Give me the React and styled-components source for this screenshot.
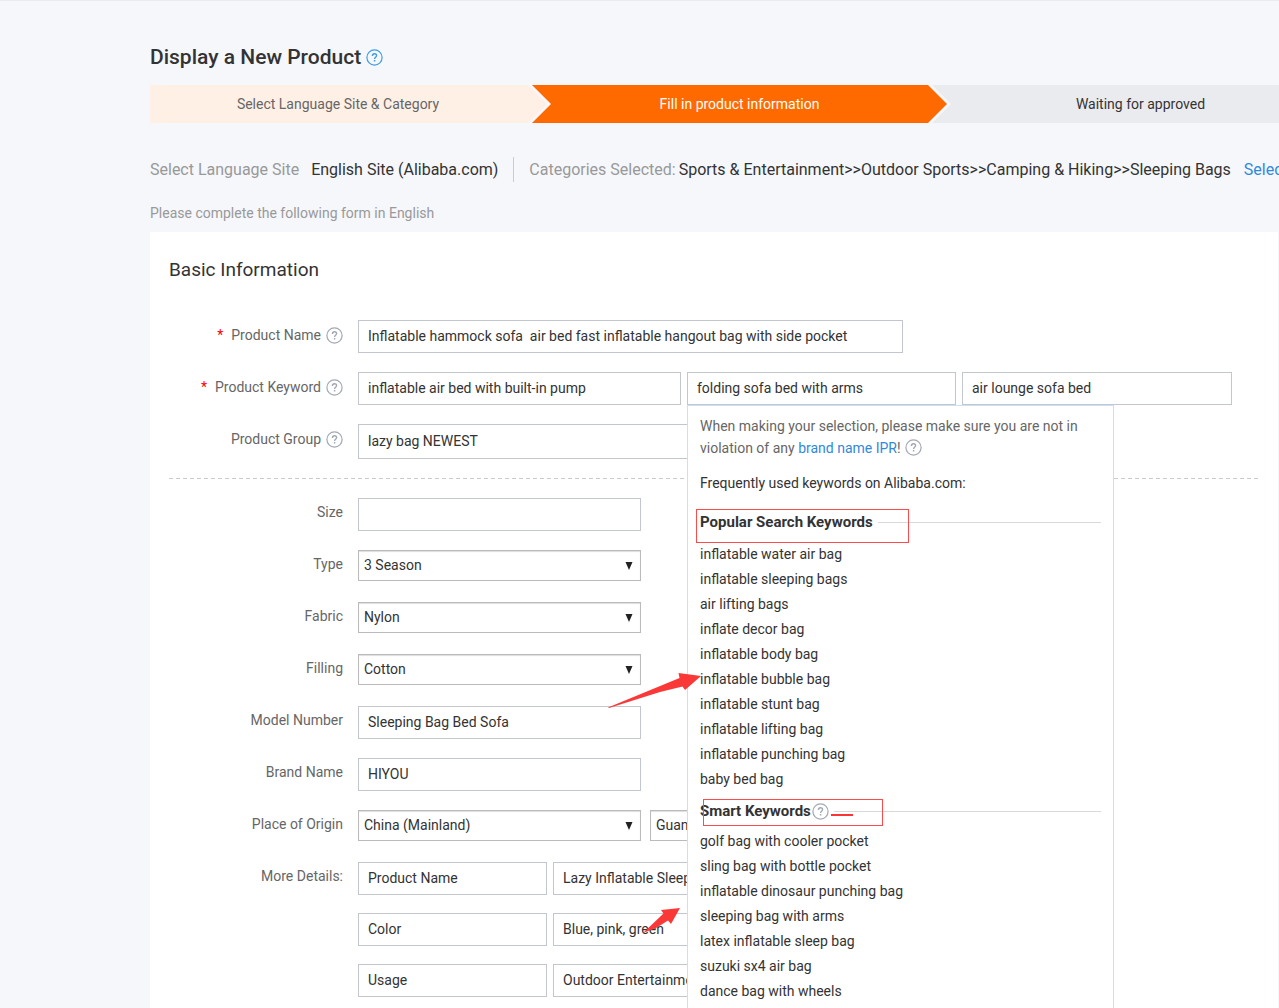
import React from "react";
import styled, { createGlobalStyle } from "styled-components";

const GlobalStyle = createGlobalStyle`
  * {
    box-sizing: border-box;
  }

  body {
    margin: 0;
    background-color: #f5f7fb;
  }

  body, input, select {
    font-family: Roboto, "Liberation Sans", sans-serif;
    font-size: 14px;
    color: #333;
  }
`;

const Page = styled.div`
  display: flex;
  flex-direction: column;
  min-height: 100vh;
  padding: 42px 1px 0 150px;
  border-top: 1px solid #e9ebf0;
  overflow: hidden;
`;

const TitleRow = styled.div`
  display: flex;
  align-items: center;
  gap: 5px;
  height: 28px;
`;

const Title = styled.h1`
  margin: 0;
  font-size: 21px;
  font-weight: 500;
  line-height: 28px;
`;

const HelpSvg = styled.svg`
  flex: none;
  width: 17px;
  height: 17px;
  fill: none;
  stroke: ${(props) => (props.$blue ? "#3f9de3" : "#a3a8b5")};
`;

/* Progress bar */
const Steps = styled.ol`
  display: grid;
  grid-template-columns: 382fr 400fr 421fr;
  min-width: 1203px;
  margin: 14px 0 0;
  padding: 0;
  list-style: none;
`;

const Step = styled.li`
  height: 38px;
  line-height: 38px;
  text-align: center;
`;

const DoneStep = styled(Step)`
  margin-right: -15px;
  padding-right: 21px;
  background-color: #fff0e6;
  color: #666;
  clip-path: polygon(0 0, calc(100% - 19px) 0, 100% 50%, calc(100% - 19px) 100%, 0 100%);
`;

const CurrentStep = styled(Step)`
  margin-right: -15px;
  background-color: #ff6a00;
  color: #fff;
  clip-path: polygon(0 0, calc(100% - 19px) 0, 100% 50%, calc(100% - 19px) 100%, 0 100%, 19px 50%);
`;

const NextStep = styled(Step)`
  padding-right: 4px;
  background-color: #eaebef;
  color: #333;
  clip-path: polygon(0 0, 100% 0, 100% 100%, 0 100%, 19px 50%);
`;

/* Selected site and category */
const Summary = styled.div`
  display: flex;
  align-items: center;
  height: 26px;
  margin-top: 33px;
  font-size: 16px;
  white-space: nowrap;
`;

const SummaryLabel = styled.span`
  margin-right: ${(props) => props.$gap}px;
  color: #999;
`;

const SummaryDivider = styled.span`
  flex: none;
  width: 1px;
  height: 25px;
  margin: 0 15px;
  background-color: #ccc;
`;

const Link = styled.a`
  color: #3089dc;
  text-decoration: none;
`;

const SelectLink = styled(Link)`
  margin-left: 13px;
`;

const Hint = styled.p`
  margin: 21px 0 9px;
  line-height: 20px;
  color: #999;
`;

/* Form */
const Card = styled.form`
  flex: 1;
  padding: 25px 19px 11px;
  background-color: #fff;
`;

const CardTitle = styled.h2`
  margin: 0 0 37px;
  font-size: 19px;
  font-weight: 400;
  line-height: 26px;
`;

const Row = styled.div`
  display: grid;
  grid-template-columns: 174px minmax(0, 1fr);
  column-gap: 15px;
  min-height: 52px;
`;

const Label = styled.label`
  display: flex;
  align-items: center;
  justify-content: flex-end;
  height: ${(props) => (props.$help ? 30 : 28)}px;
  color: #666;
`;

const Required = styled.span`
  margin-right: 8px;
  color: #f00;
`;

const LabelText = styled.span`
  margin-right: ${(props) => (props.$help ? 5 : 0)}px;
`;

const Fields = styled.div`
  display: flex;
  align-items: flex-start;
  gap: ${(props) => props.$gap || 6}px;
`;

const KeywordFields = styled.div`
  display: grid;
  grid-template-columns: 323fr 269fr 270fr;
  align-items: start;
  gap: 6px;
  max-width: 874px;
`;

const Input = styled.input`
  width: 100%;
  max-width: ${(props) => (props.$width ? `${props.$width}px` : "none")};
  height: ${(props) => (props.$tall ? 35 : 33)}px;
  padding: 0 9px 2px;
  border: 1px solid #c4c6cf;
  border-radius: 0;
  background-color: #fff;
  outline: none;
`;

const SelectBox = styled.div`
  display: grid;
  align-items: center;
  align-self: start;
  width: ${(props) => props.$width}px;

  > * {
    grid-area: 1 / 1;
  }
`;

const Select = styled.select`
  width: 100%;
  height: 31px;
  padding: 0 24px 1px 5px;
  border: 1px solid #bbb;
  border-radius: 0;
  background-color: #fff;
  box-shadow: inset 0 1px 1px #ddd;
  appearance: none;
  outline: none;
`;

const Caret = styled.svg`
  justify-self: end;
  width: 8px;
  height: 8px;
  margin-right: 8px;
  fill: #222;
  pointer-events: none;
`;

const Divider = styled.div`
  height: 1px;
  margin: 2px 0 19px;
  background: repeating-linear-gradient(to right, #ccc 0 4px, transparent 4px 7px);
`;

const DetailRows = styled.div`
  display: flex;
  flex-direction: column;
  gap: 18px;
`;

/* Keyword suggestions */
const KeywordField = styled.div`
  position: relative;
`;

const Popup = styled.div`
  position: absolute;
  z-index: 1;
  top: 100%;
  left: 0;
  width: 427px;
  padding: 9px 12px 40px;
  border: 1px solid #c9e0f5;
  background-color: #fff;
`;

const Notice = styled.p`
  margin: 0;
  line-height: 22px;
  color: #666;

  ${HelpSvg} {
    margin-left: 4px;
    vertical-align: -3px;
  }
`;

const Frequent = styled.p`
  margin: 13px 0 18px;
  line-height: 22px;
`;

const SectionHead = styled.div`
  position: relative;
  display: flex;
  align-items: center;
  gap: 1px;
  height: 20px;

  &::after {
    content: "";
    flex: 1;
    height: 1px;
    margin-left: 4px;
    background-color: #d9d9d9;
  }
`;

const SectionTitle = styled.h3`
  margin: 0;
  font-size: 15px;
  font-weight: 700;
`;

const Keywords = styled.ul`
  margin: ${(props) => (props.$tight ? 8 : 10)}px 0 9px;
  padding: 0;
  list-style: none;
  line-height: 25px;
`;

/* Red pen marks over the suggestions */
const MarkBox = styled.span`
  position: absolute;
  top: ${(props) => props.$top}px;
  left: ${(props) => props.$left}px;
  width: ${(props) => props.$width}px;
  height: ${(props) => props.$height}px;
  border: 1px solid #fb4b4b;
`;

const MarkLine = styled.span`
  position: absolute;
  top: 13px;
  left: 131px;
  width: 22px;
  height: 2px;
  background-color: #fb3434;
`;

const Arrow = styled.svg`
  position: absolute;
  top: ${(props) => props.$top}px;
  left: ${(props) => props.$left}px;
  fill: #fb3838;
  pointer-events: none;
`;

const popular = [
  "inflatable water air bag",
  "inflatable sleeping bags",
  "air lifting bags",
  "inflate decor bag",
  "inflatable body bag",
  "inflatable bubble bag",
  "inflatable stunt bag",
  "inflatable lifting bag",
  "inflatable punching bag",
  "baby bed bag",
];

const smart = [
  "golf bag with cooler pocket",
  "sling bag with bottle pocket",
  "inflatable dinosaur punching bag",
  "sleeping bag with arms",
  "latex inflatable sleep bag",
  "suzuki sx4 air bag",
  "dance bag with wheels",
];

const details = [
  ["Product Name", "Lazy Inflatable Sleeping Bag"],
  ["Color", "Blue, pink, green"],
  ["Usage", "Outdoor Entertainment"],
];

const HelpIcon = ({ blue }) => (
  <HelpSvg viewBox="0 0 17 17" $blue={blue} role="img" aria-label="Help">
    <circle cx="8.5" cy="8.5" r="7.6" strokeWidth="1.2" />
    <path d="M6.4 6.9C6.4 5.5 7.3 4.7 8.5 4.7s2.1.8 2.1 1.9c0 1.6-2 1.6-2 3.3" strokeWidth="1.4" />
    <path d="M8.6 11v1.5" strokeWidth="1.5" />
  </HelpSvg>
);

const FormRow = ({ id, label, required, help, children }) => (
  <Row>
    <Label htmlFor={id} $help={help}>
      {required && <Required>*</Required>}
      <LabelText $help={help}>{label}</LabelText>
      {help && <HelpIcon />}
    </Label>
    {children}
  </Row>
);

const SelectField = ({ id, value, width = 283, label }) => (
  <SelectBox $width={width}>
    <Select id={id} aria-label={label} defaultValue={value}>
      <option>{value}</option>
    </Select>
    <Caret viewBox="0 0 8 8">
      <path d="M0.5 0h7L4 8z" />
    </Caret>
  </SelectBox>
);

const KeywordPopup = () => (
  <Popup>
    <Notice>
      When making your selection, please make sure you are not in violation of any{" "}
      <Link href="#ipr">brand name IPR</Link>!<HelpIcon />
    </Notice>
    <Frequent>Frequently used keywords on Alibaba.com:</Frequent>

    <SectionHead>
      <SectionTitle>Popular Search Keywords</SectionTitle>
      <MarkBox $top={-3} $left={-4} $width={213} $height={34} />
    </SectionHead>
    <Keywords>
      {popular.map((word) => (
        <li key={word}>{word}</li>
      ))}
    </Keywords>

    <SectionHead>
      <SectionTitle>Smart Keywords</SectionTitle>
      <HelpIcon />
      <MarkBox $top={-2} $left={3} $width={180} $height={27} />
      <MarkLine />
    </SectionHead>
    <Keywords $tight>
      {smart.map((word) => (
        <li key={word}>{word}</li>
      ))}
    </Keywords>

    <Arrow $top={266} $left={-80} width="94" height="38" viewBox="0 0 94 38">
      <path d="M0 35.5 L71.5 6 L70.5 1 L93 4 L77 18 L74.5 14.5 L52 20 L1 36z" />
    </Arrow>
    <Arrow $top={501} $left={-45} width="38" height="28" viewBox="0 0 38 28">
      <path d="M0 26 L20.5 6.5 L18 3 L37 1 L28 17 L25 13.5 L13 21z" />
    </Arrow>
  </Popup>
);

const App = () => {
  return (
    <Page>
      <GlobalStyle />
      <TitleRow>
        <Title>Display a New Product</Title>
        <HelpIcon blue />
      </TitleRow>

      <Steps>
        <DoneStep>Select Language Site &amp; Category</DoneStep>
        <CurrentStep>Fill in product information</CurrentStep>
        <NextStep>Waiting for approved</NextStep>
      </Steps>

      <Summary>
        <SummaryLabel $gap={12}>Select Language Site</SummaryLabel>
        <span>English Site (Alibaba.com)</span>
        <SummaryDivider />
        <SummaryLabel $gap={3}>Categories Selected:</SummaryLabel>
        <span>Sports &amp; Entertainment&gt;&gt;Outdoor Sports&gt;&gt;Camping &amp; Hiking&gt;&gt;Sleeping Bags</span>
        <SelectLink href="#category">Select Again</SelectLink>
      </Summary>

      <Hint>Please complete the following form in English</Hint>

      <Card>
        <CardTitle>Basic Information</CardTitle>

        <FormRow id="name" label="Product Name" required help>
          <Input
            id="name"
            $width={545}
            defaultValue={"Inflatable hammock sofa \u00a0air bed fast inflatable hangout bag with side pocket"}
          />
        </FormRow>
        <FormRow id="keyword" label="Product Keyword" required help>
          <KeywordFields>
            <Input id="keyword" defaultValue="inflatable air bed with built-in pump" />
            <KeywordField>
              <Input aria-label="Product Keyword 2" defaultValue="folding sofa bed with arms" />
              <KeywordPopup />
            </KeywordField>
            <Input aria-label="Product Keyword 3" defaultValue="air lounge sofa bed" />
          </KeywordFields>
        </FormRow>
        <FormRow id="group" label="Product Group" help>
          <Input id="group" $width={545} $tall defaultValue="lazy bag NEWEST" />
        </FormRow>

        <Divider />

        <FormRow id="size" label="Size">
          <Input id="size" $width={283} />
        </FormRow>
        <FormRow id="type" label="Type">
          <SelectField id="type" value="3 Season" />
        </FormRow>
        <FormRow id="fabric" label="Fabric">
          <SelectField id="fabric" value="Nylon" />
        </FormRow>
        <FormRow id="filling" label="Filling">
          <SelectField id="filling" value="Cotton" />
        </FormRow>
        <FormRow id="model" label="Model Number">
          <Input id="model" $width={283} defaultValue="Sleeping Bag Bed Sofa" />
        </FormRow>
        <FormRow id="brand" label="Brand Name">
          <Input id="brand" $width={283} defaultValue="HIYOU" />
        </FormRow>
        <FormRow id="origin" label="Place of Origin">
          <Fields $gap={9}>
            <SelectField id="origin" value="China (Mainland)" />
            <SelectField value="Guangdong" label="Province" width={160} />
          </Fields>
        </FormRow>
        <FormRow id="detail-0" label="More Details:">
          <DetailRows>
            {details.map(([name, value], i) => (
              <Fields key={name}>
                <Input id={`detail-${i}`} aria-label="Attribute" $width={189} defaultValue={name} />
                <Input aria-label={name} $width={283} defaultValue={value} />
              </Fields>
            ))}
          </DetailRows>
        </FormRow>
      </Card>
    </Page>
  );
};

export default App;
